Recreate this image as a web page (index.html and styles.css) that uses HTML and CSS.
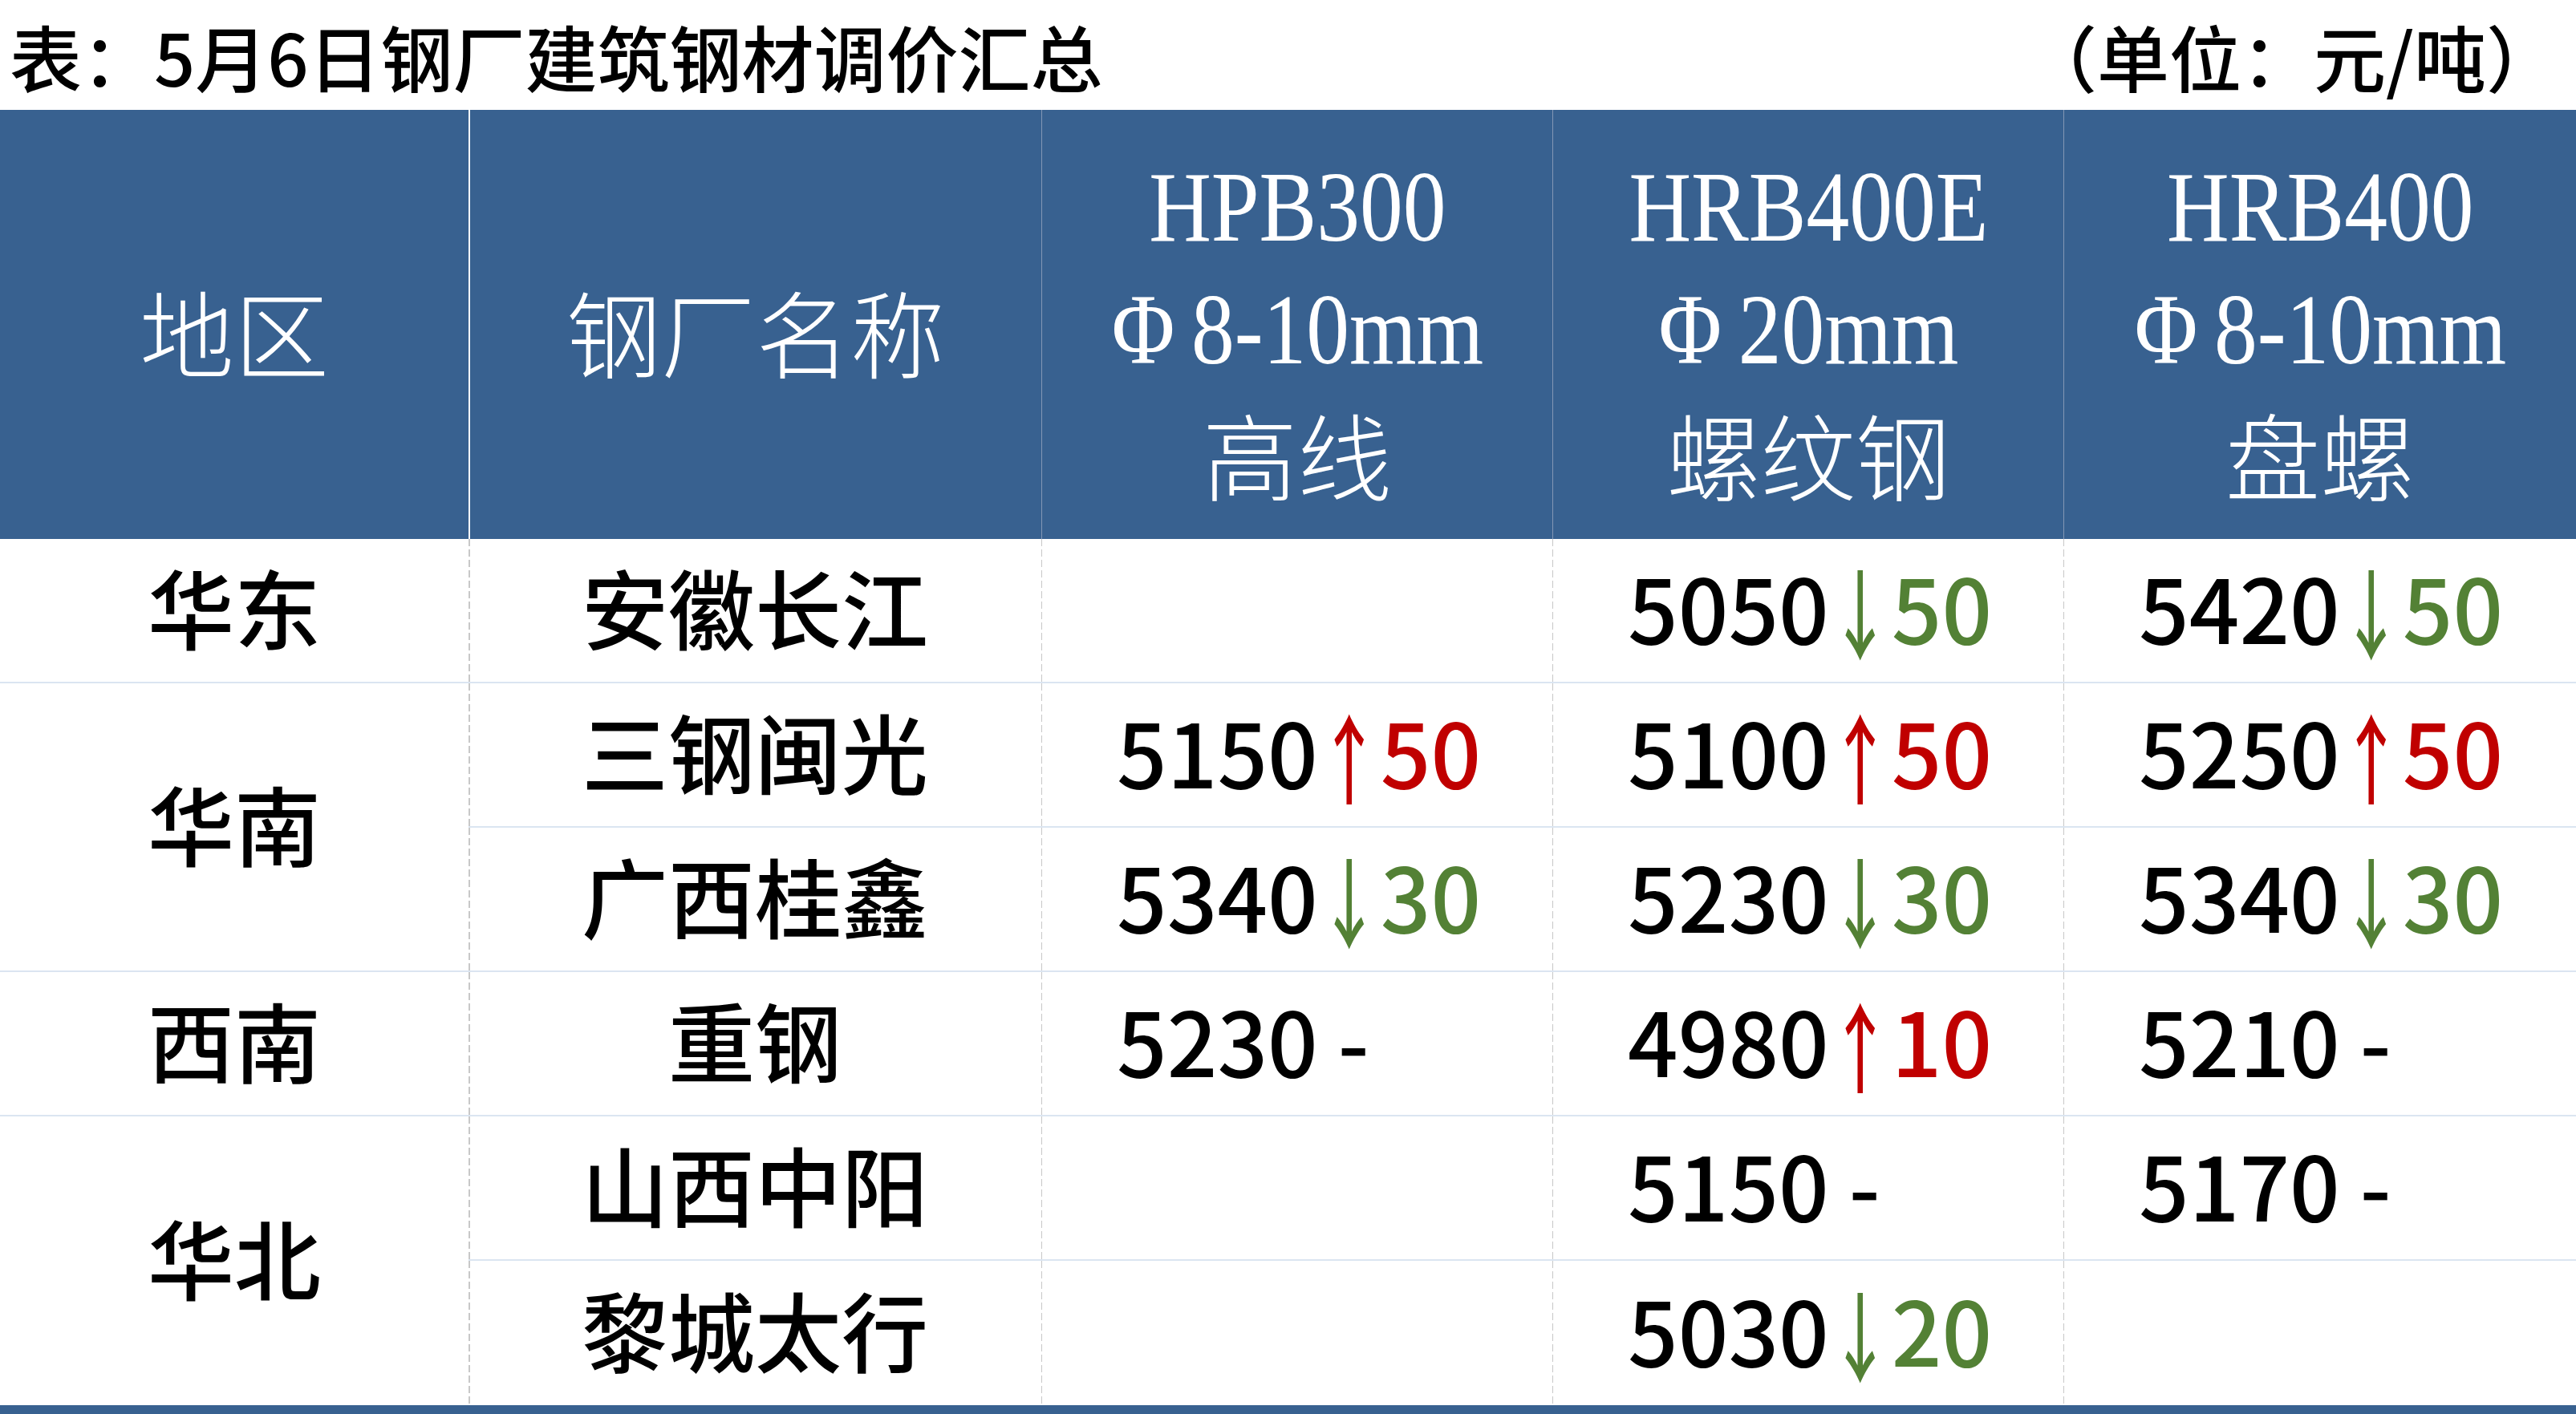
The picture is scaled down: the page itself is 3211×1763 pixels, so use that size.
FILE: index.html
```html
<!DOCTYPE html>
<html lang="zh-CN">
<head>
<meta charset="utf-8">
<title>5月6日钢厂建筑钢材调价汇总</title>
<link rel="stylesheet" href="styles.css">
</head>
<body>
<div class="page">
  <header class="caption">
    <h1 class="title">表：5月6日钢厂建筑钢材调价汇总</h1>
    <div class="unit">（单位：元/吨）</div>
  </header>

  <div class="sheet">
    <div class="th c0"><span class="hz">地区</span></div>
    <div class="th c1"><span class="hz">钢厂名称</span></div>
    <div class="th c2">
      <span class="lat">HPB300</span>
      <span class="lat"><span class="phi">Φ</span>8-10mm</span>
      <span class="hz">高线</span>
    </div>
    <div class="th c3">
      <span class="lat">HRB400E</span>
      <span class="lat"><span class="phi">Φ</span>20mm</span>
      <span class="hz">螺纹钢</span>
    </div>
    <div class="th c4">
      <span class="lat">HRB400</span>
      <span class="lat"><span class="phi">Φ</span>8-10mm</span>
      <span class="hz">盘螺</span>
    </div>

    <!-- 华东 -->
    <div class="td region">华东</div>
    <div class="td mill c1">安徽长江</div>
    <div class="td val"></div>
    <div class="td val">5050<span class="dn"><span class="arr">↓</span>50</span></div>
    <div class="td val">5420<span class="dn"><span class="arr">↓</span>50</span></div>

    <!-- 华南 -->
    <div class="td region span2">华南</div>
    <div class="td mill c1">三钢闽光</div>
    <div class="td val">5150<span class="up"><span class="arr">↑</span>50</span></div>
    <div class="td val">5100<span class="up"><span class="arr">↑</span>50</span></div>
    <div class="td val">5250<span class="up"><span class="arr">↑</span>50</span></div>

    <div class="td mill c1">广西桂鑫</div>
    <div class="td val">5340<span class="dn"><span class="arr">↓</span>30</span></div>
    <div class="td val">5230<span class="dn"><span class="arr">↓</span>30</span></div>
    <div class="td val">5340<span class="dn"><span class="arr">↓</span>30</span></div>

    <!-- 西南 -->
    <div class="td region">西南</div>
    <div class="td mill c1">重钢</div>
    <div class="td val">5230 -</div>
    <div class="td val">4980<span class="up"><span class="arr">↑</span>10</span></div>
    <div class="td val">5210 -</div>

    <!-- 华北 -->
    <div class="td region span2 last">华北</div>
    <div class="td mill c1">山西中阳</div>
    <div class="td val"></div>
    <div class="td val">5150 -</div>
    <div class="td val">5170 -</div>

    <div class="td mill c1 last">黎城太行</div>
    <div class="td val last"></div>
    <div class="td val last">5030<span class="dn"><span class="arr">↓</span>20</span></div>
    <div class="td val last"></div>
  </div>

  <div class="endbar"></div>
</div>
</body>
</html>
```

FILE: styles.css
```css
* {
  box-sizing: border-box;
}

html,
body {
  margin: 0;
  padding: 0;
  background: #ffffff;
}

body {
  font-family: "Noto Sans CJK SC", "Noto Sans", sans-serif;
  color: #000000;
}

.page {
  width: 3211px;
}

/* ---------- caption line ---------- */
.caption {
  display: flex;
  justify-content: space-between;
  align-items: center;
  height: 137px;
  padding: 0 22px 0 12px;
}

.title,
.unit {
  margin: 0;
  font-size: 90px;
  font-weight: 500;
  line-height: 1;
  white-space: nowrap;
}

/* ---------- table grid ---------- */
.sheet {
  display: grid;
  grid-template-columns: 584px 714px 637px 637px 639px;
  grid-template-rows: 535px repeat(6, 180px);
}

.th {
  background: #386190;
  color: #ffffff;
  display: flex;
  flex-direction: column;
  align-items: center;
  justify-content: center;
  padding-top: 14px;
}

.th + .th {
  border-left: 1px solid #8397b5;
}

.th.c1 {
  border-left: 2px solid #ffffff;
}

.hz {
  font-family: "Noto Sans CJK SC", sans-serif;
  font-size: 118px;
  font-weight: 300;
  line-height: 153px;
  white-space: nowrap;
}

.lat {
  display: inline-block;
  font-family: "Liberation Serif", "DejaVu Serif", serif;
  font-size: 125px;
  line-height: 153px;
  white-space: nowrap;
  transform: scaleX(0.86);
}

.phi {
  margin-right: 24px;
}

/* ---------- body cells ---------- */
.td {
  display: flex;
  align-items: center;
  padding-bottom: 12px;
  font-size: 110px;
  font-weight: 500;
  line-height: 1;
  white-space: nowrap;
  border-bottom: 2px solid #dbe5f1;
  background-image: repeating-linear-gradient(to bottom, #c8c8c8 0 9px, transparent 9px 13px);
  background-size: 1px 100%;
  background-repeat: no-repeat;
  background-position: left top;
}

.td.last {
  border-bottom: 0;
}

.region {
  justify-content: center;
  background-image: none;
  font-size: 108px;
}

.mill {
  justify-content: center;
  font-size: 108px;
}

.td.c1 {
  background-size: 2px 100%;
}

.span2 {
  grid-row: span 2;
}

.val {
  justify-content: flex-start;
  padding-left: 94px;
}

.up {
  color: #c00000;
}

.dn {
  color: #538135;
}

.arr {
  display: inline-block;
  font-size: 78px;
  font-weight: 500;
  line-height: 1;
  vertical-align: 9px;
  transform: scaleY(1.56);
}

/* ---------- bottom rule ---------- */
.endbar {
  height: 11px;
  background: #386190;
}
```
